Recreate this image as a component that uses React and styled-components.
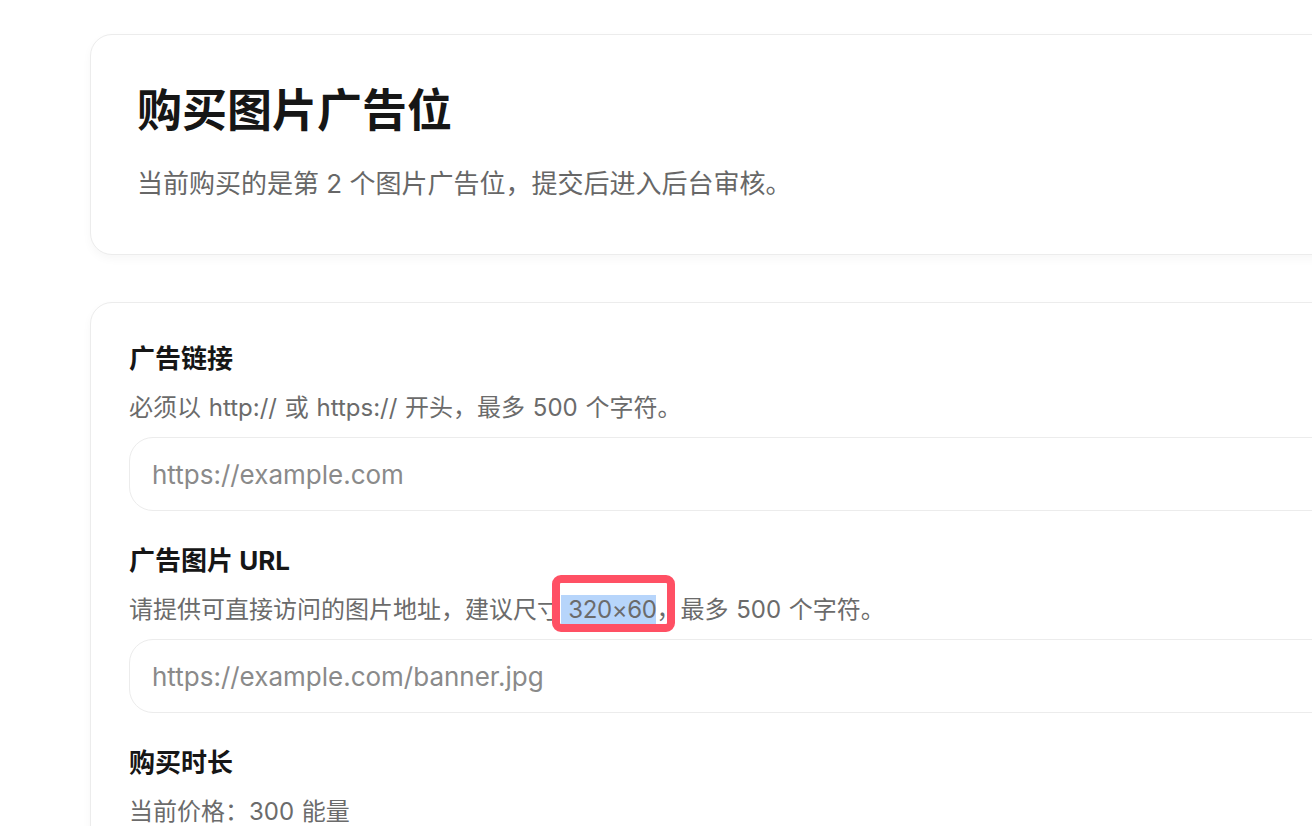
import React from 'react';
import styled, { createGlobalStyle } from 'styled-components';

const GlobalStyle = createGlobalStyle`
  html, body {
    margin: 0;
    padding: 0;
    background: #ffffff;
    overflow: hidden;
  }
  body {
    font-family: Inter, "Noto Sans CJK SC", sans-serif;
    color: #1b1b1b;
  }
`;

const Page = styled.div`
  display: flex;
  flex-direction: column;
  gap: 47px;
  padding: 34px 0 0 90px;
  width: 1400px;
`;

const Card = styled.section`
  background: #ffffff;
  border: 1.5px solid #ececec;
  border-radius: 22px;
  box-shadow: 0 4px 10px rgba(0, 0, 0, 0.035);
  box-sizing: border-box;
  padding: ${p => p.$pad};
  width: 1300px;
`;

const Title = styled.h1`
  font-size: 45px;
  font-weight: 700;
  line-height: 56px;
  margin: 0 0 27px;
  color: #161616;
`;

const Lead = styled.p`
  color: #676767;
  font-size: 26px;
  line-height: 36px;
  margin: 0;
`;

const Field = styled.div`
  display: flex;
  flex-direction: column;
  margin-bottom: 32px;
`;

const Label = styled.label`
  color: #161616;
  font-size: 26px;
  font-weight: 700;
  line-height: 36px;
`;

const Hint = styled.div`
  color: #6b6b6b;
  font-size: 24px;
  line-height: 34px;
  margin-top: 14px;
  word-spacing: 1px;
`;

const Input = styled.input`
  appearance: none;
  background: #ffffff;
  border: 1.5px solid #ececec;
  border-radius: 24px;
  box-sizing: border-box;
  font-family: inherit;
  font-size: 26px;
  height: 74px;
  margin-top: 12px;
  outline: none;
  padding: 0 22px;
  width: 100%;

  &::placeholder {
    color: #8a8a8a;
  }
`;

const Marked = styled.span`
  position: relative;
  z-index: 0;

  &::before {
    content: "";
    position: absolute;
    left: -9px;
    right: 5px;
    top: -20px;
    bottom: -8px;
    background: #ffffff;
    border: 8px solid #ff5064;
    border-radius: 9px;
    z-index: -1;
  }
`;

const Selected = styled.span`
  background: #b7d5fb;
  letter-spacing: -0.4px;
`;

export default function App() {
  return (
    <>
      <GlobalStyle />
      <Page>
        <Card $pad="48px 46px 52px">
          <Title>购买图片广告位</Title>
          <Lead>当前购买的是第 2 个图片广告位，提交后进入后台审核。</Lead>
        </Card>
        <Card $pad="38px 38px 40px">
          <Field>
            <Label>广告链接</Label>
            <Hint>必须以 http:// 或 https:// 开头，最多 500 个字符。</Hint>
            <Input placeholder="https://example.com" />
          </Field>
          <Field>
            <Label>广告图片 URL</Label>
            <Hint>
              请提供可直接访问的图片地址，建议尺寸
              <Marked>
                <Selected> 320×60</Selected>，
              </Marked>
              最多 500 个字符。
            </Hint>
            <Input placeholder="https://example.com/banner.jpg" />
          </Field>
          <Field>
            <Label>购买时长</Label>
            <Hint>当前价格：300 能量</Hint>
          </Field>
        </Card>
      </Page>
    </>
  );
}
